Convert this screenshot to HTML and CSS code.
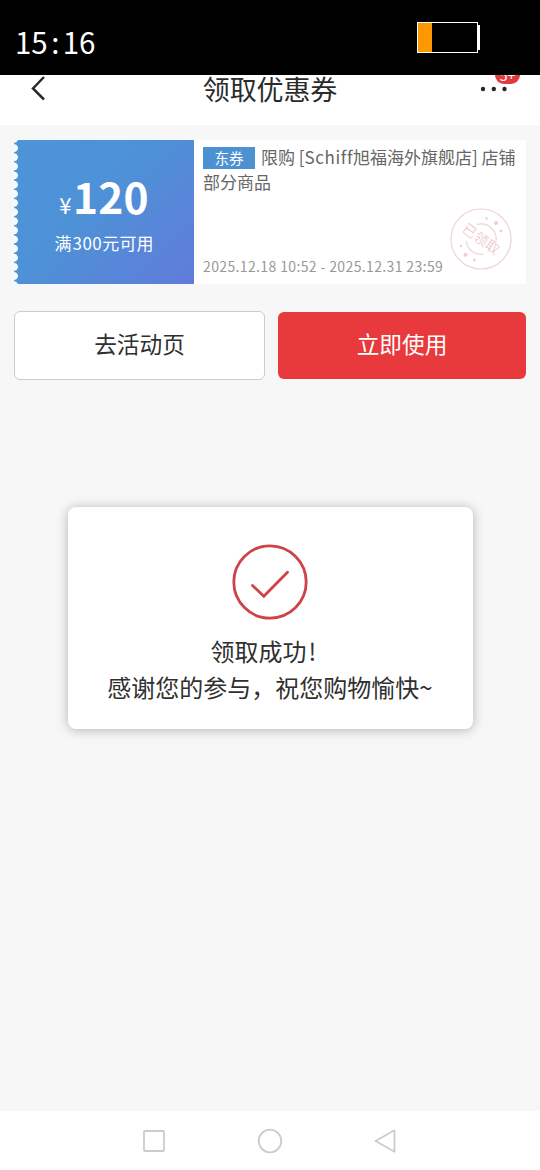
FILE: index.html
```html
<!DOCTYPE html>
<html lang="zh-CN">
<head>
<meta charset="utf-8">
<title>领取优惠券</title>
<link rel="stylesheet" href="styles.css">
</head>
<body>
<div class="status">
  <div class="clock">15<span class="colon">:</span>16</div>
  <div class="battery"><div class="cell"><div class="charge"></div></div><div class="cap"></div></div>
</div>
<header class="header">
  <svg class="back" width="16" height="26" viewBox="0 0 16 26"><path d="M14 2 L3 13.5 L14 24.5" fill="none" stroke="#2b2b2b" stroke-width="2.5"/></svg>
  <h1 class="title">领取优惠券</h1>
  <div class="more">
    <svg class="dots" width="28" height="6" viewBox="0 0 28 6"><g fill="#262626"><circle cx="3" cy="3" r="2.2"/><circle cx="13.8" cy="3" r="2.2"/><circle cx="24.5" cy="3" r="2.2"/></g></svg>
    <span class="badge">5+</span>
  </div>
</header>
<main class="page">
  <section class="coupon">
    <div class="value">
      <div class="amount"><span class="yen">¥</span>120</div>
      <div class="limit">满<span class="num">300</span>元可用</div>
    </div>
    <div class="detail">
      <div class="desc"><span class="tag">东券</span><span>限购 [<span class="brand">Schiff</span>旭福海外旗舰店] 店铺</span></div>
      <div class="desc">部分商品</div>
      <div class="period">2025.12.18 10:52 - 2025.12.31 23:59</div>
      <svg class="stamp" width="62" height="62" viewBox="-31 -31 62 62">
        <g fill="none" stroke="#f0d3d6" stroke-width="1.2">
          <circle r="30"/>
          <path d="M-4 -14.5 A15 15 0 0 1 14.8 3"/>
          <path d="M-14.8 2 A15 15 0 0 0 3 15"/>
        </g>
        <text class="stamp-text" transform="rotate(36)" x="0" y="5" text-anchor="middle">已领取</text>
        <g fill="#f3cace"><circle cx="5.5" cy="-20.5" r="1.2"/><circle cx="15" cy="-16" r="2"/><circle cx="20" cy="-8" r="1.4"/><circle cx="-20" cy="7" r="1.2"/><circle cx="-15.5" cy="15.8" r="2"/><circle cx="-6.5" cy="21" r="1.4"/></g>
      </svg>
    </div>
  </section>
  <div class="actions">
    <button class="btn plain">去活动页</button>
    <button class="btn primary">立即使用</button>
  </div>
  <section class="dialog">
    <svg class="check" width="76" height="76" viewBox="0 0 76 76"><g fill="none" stroke="#cf4247"><circle cx="38" cy="38" r="36.2" stroke-width="2.8"/><path d="M20.5 41.5 L31.8 52.3 L55.5 28.3" stroke-width="2.8" stroke-linecap="round"/></g></svg>
    <p class="message result">领取成功<span class="mark">!</span></p>
    <p class="message">感谢您的参与，祝您购物愉快~</p>
  </section>
</main>
<nav class="nav">
  <svg width="24" height="24" viewBox="0 0 24 24"><rect x="2" y="2" width="20" height="20" rx="1"/></svg>
  <svg width="26" height="26" viewBox="0 0 26 26"><circle cx="13" cy="13" r="11.3"/></svg>
  <svg width="24" height="26" viewBox="0 0 24 26"><path d="M20.5 2.2 V23.8 L1.5 13 Z" stroke-linejoin="round"/></svg>
</nav>
</body>
</html>
```
FILE: styles.css
```css
* { box-sizing: border-box; }
body {
  margin: 0;
  height: 1170px;
  display: flex;
  flex-direction: column;
  overflow: hidden;
  background: #f7f7f7;
  font-family: "Noto Sans CJK SC", sans-serif;
  color: #2b2b2b;
}
h1, p { margin: 0; font-weight: 400; }
.status {
  position: relative;
  z-index: 2;
  height: 75px;
  flex: none;
  display: flex;
  justify-content: space-between;
  padding: 22px 60px 0 15px;
  background: #000;
}
.clock { font-size: 29.5px; line-height: 38px; color: #fff; display: flex; }
.colon { width: 15px; text-align: center; }
.battery { display: flex; align-items: center; height: 31px; }
.cell { width: 61px; height: 31px; border: 1px solid #fff; }
.charge { width: 14px; height: 29px; background: #ff9800; }
.cap { width: 2px; height: 25px; background: #fff; }
.header {
  height: 50px;
  flex: none;
  display: grid;
  grid-template-columns: 1fr auto 1fr;
  align-items: start;
  padding: 0 30px;
  background: #fff;
}
.title { font-size: 27px; line-height: 28px; letter-spacing: -0.1px; }
.more { position: relative; justify-self: end; width: 30px; height: 28px; padding-top: 11px; }
.dots { display: block; }
.badge {
  position: absolute;
  left: 15px;
  top: -9px;
  width: 25px;
  height: 18px;
  border-radius: 9px;
  background: #e4393c;
  color: #fff;
  font-size: 14px;
  line-height: 19px;
  text-align: center;
}
.page { flex: 1; padding: 15px 14px 0; }
.coupon { display: flex; height: 144px; background: #fff; }
.value {
  width: 180px;
  display: flex;
  flex-direction: column;
  align-items: center;
  padding-top: 32px;
  color: #fff;
  background:
    radial-gradient(circle at 0 50%, #f5fafb 3.5px, transparent 4.3px) 0 3.5px / 6px 9.15px repeat-y,
    linear-gradient(135deg, #4d94d7 0%, #4e91d7 45%, #617bda 100%);
}
.amount { height: 48px; font: 700 42.5px/48px "Noto Sans CJK SC", sans-serif; letter-spacing: 0.2px; }
.yen { font-size: 22px; font-weight: 400; letter-spacing: 1.5px; }
.limit { font-size: 17px; line-height: 24px; margin-top: 11px; letter-spacing: 0.1px; }
.num { letter-spacing: 0.5px; margin-left: 1px; }
.detail { position: relative; flex: 1; padding: 4px 0 0 9px; }
.desc { display: flex; align-items: center; font-size: 17px; line-height: 25px; height: 25px; color: #666; white-space: nowrap; }
.brand { letter-spacing: 0.6px; }
.tag {
  width: 52px;
  height: 22px;
  margin: 3px 6px 0 0;
  background: #4c91d2;
  color: #fff;
  font-size: 14.5px;
  line-height: 21px;
  text-align: center;
}
.period { margin-top: 61px; font-size: 14px; line-height: 22px; letter-spacing: 0.37px; color: #999; white-space: nowrap; }
.stamp { position: absolute; right: 14px; top: 68px; }
.stamp-text { font-size: 14px; font-weight: 300; fill: #ebb9be; }
.actions { display: flex; align-items: center; gap: 13px; margin-top: 27px; height: 69px; }
.btn { border: 0; border-radius: 6px; padding: 0 0 4px; font: 400 22.7px/32px "Noto Sans CJK SC", sans-serif; }
.plain { width: 251px; height: 69px; border: 1.5px solid #ccc; background: #fff; color: #303030; }
.primary { width: 248px; height: 67px; background: #e83a3d; color: #fff; }
.dialog {
  width: 405px;
  height: 222px;
  margin: 127px auto 0;
  padding-top: 37px;
  text-align: center;
  background: #fff;
  border-radius: 8px;
  box-shadow: 0 1px 12px rgba(0, 0, 0, 0.28);
}
.check { display: block; margin: 0 auto 13px; }
.message { font-size: 24px; line-height: 36px; color: #303030; white-space: nowrap; }
.result { padding-right: 13px; }
.mark { margin-left: 2px; }
.nav {
  height: 59px;
  flex: none;
  display: flex;
  justify-content: center;
  align-items: center;
  gap: 91px;
  background: #fff;
}
.nav svg { fill: none; stroke: #ccc; stroke-width: 1.8; }
```
